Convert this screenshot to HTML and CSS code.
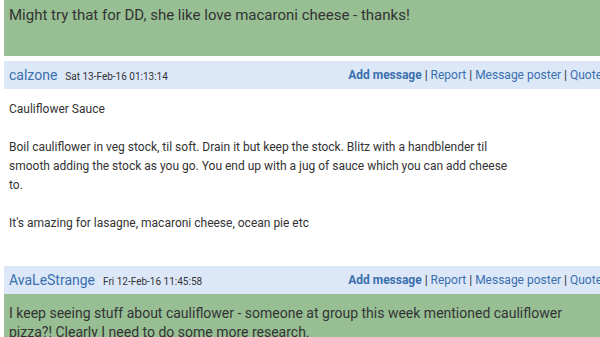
FILE: index.html
```html
<!DOCTYPE html>
<html>
<head>
<meta charset="utf-8">
<link rel="stylesheet" href="styles.css">
</head>
<body>
<div class="thread">
  <div class="post post-green top">
    <div class="msg first">Might try that for DD, she like love macaroni cheese - thanks!</div>
  </div>
  <div class="post">
    <div class="head">
      <div class="who"><span class="name">calzone</span><span class="date">Sat 13-Feb-16 01:13:14</span></div>
      <div class="links"><a class="add">Add message</a> | <a>Report</a> | <a>Message poster</a> | <a>Quote</a></div>
    </div>
    <div class="msg body">Cauliflower Sauce<br><br>Boil cauliflower in veg stock, til soft. Drain it but keep the stock. Blitz with a handblender til smooth adding the stock as you go. You end up with a jug of sauce which you can add cheese to.<br><br>It's amazing for lasagne, macaroni cheese, ocean pie etc</div>
  </div>
  <div class="post">
    <div class="head">
      <div class="who"><span class="name">AvaLeStrange</span><span class="date">Fri 12-Feb-16 11:45:58</span></div>
      <div class="links"><a class="add">Add message</a> | <a>Report</a> | <a>Message poster</a> | <a>Quote</a></div>
    </div>
    <div class="msg green">I keep seeing stuff about cauliflower - someone at group this week mentioned cauliflower pizza?! Clearly I need to do some more research.</div>
  </div>
</div>
</body>
</html>
```
FILE: styles.css
```css
html, body {
  margin: 0;
  padding: 0;
  overflow: hidden;
  background: #fff;
}
body {
  font-family: Roboto, "Noto Sans", sans-serif;
  color: #333;
}
.thread {
  width: 607px;
  padding-left: 4px;
  display: flex;
  flex-direction: column;
}
.post-green.top {
  background: #97bf93;
  height: 56px;
  margin-bottom: 5px;
}
.msg {
  font-size: 14px;
  line-height: 19px;
  padding: 6px 5px 0 5px;
}
.first {
  font-size: 15px;
}
.body {
  height: 166px;
  padding-top: 11px;
  width: 513px;
  font-size: 12px;
  line-height: 19px;
}
.green {
  background: #97bf93;
  line-height: 18.5px;
  height: 60px;
  padding-top: 10px;
  padding-right: 32px;
}
.head {
  background: #dce8f8;
  height: 28px;
  display: flex;
  align-items: center;
  justify-content: space-between;
  padding: 0 5px;
}
.who {
  display: flex;
  align-items: baseline;
}
.name {
  color: #3a6fae;
  font-size: 14px;
}
.date {
  font-size: 10px;
  margin-left: 8px;
  color: #333;
}
.links {
  font-size: 12px;
  color: #333;
  padding-right: 4px;
}
.links a {
  color: #3a6fae;
}
.links .add {
  font-weight: bold;
}
```
